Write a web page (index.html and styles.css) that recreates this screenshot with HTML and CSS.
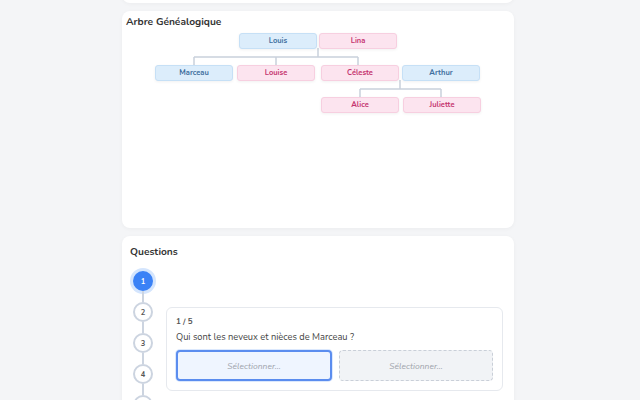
FILE: index.html
```html
<!DOCTYPE html>
<html lang="fr">
<head>
  <meta charset="UTF-8">
  <title>Arbre Généalogique - Questions</title>
  <link rel="stylesheet" href="styles.css">
</head>
<body>
<div class="page">
  <!-- bottom of the previous panel, scrolled out of view -->
  <div class="card card-prev"></div>

  <div class="card tree-card">
    <h3 class="card-title">Arbre Généalogique</h3>
    <div class="tree">
      <svg class="links" width="384" height="195">
        <path d="M192 19 V28 M68 28 H232 M68 28 V36 M150 28 V36 M232 28 V36" />
        <path d="M274 51 V60 M234 60 H315 M234 60 V68 M315 60 V68" />
      </svg>
      <div class="node male" style="left:113px; top:4px">Louis</div>
      <div class="node female" style="left:193px; top:4px">Lina</div>

      <div class="node male" style="left:29px; top:36px">Marceau</div>
      <div class="node female" style="left:111px; top:36px">Louise</div>
      <div class="node female" style="left:195px; top:36px">Céleste</div>
      <div class="node male" style="left:276px; top:36px">Arthur</div>

      <div class="node female" style="left:195px; top:68px">Alice</div>
      <div class="node female" style="left:277px; top:68px">Juliette</div>
    </div>
  </div>

  <div class="card quiz-card">
    <h3 class="card-title">Questions</h3>
    <div class="quiz">
      <div class="steps">
        <div class="step active">1</div>
        <div class="step">2</div>
        <div class="step">3</div>
        <div class="step">4</div>
        <div class="step">5</div>
      </div>
      <div class="quiz-body">
        <div class="question">
          <div class="q-count">1 / 5</div>
          <div class="q-text">Qui sont les neveux et nièces de Marceau ?</div>
          <div class="answers">
            <div class="slot selected">Sélectionner...</div>
            <div class="slot empty">Sélectionner...</div>
          </div>
        </div>
      </div>
    </div>
  </div>
</div>
</body>
</html>
```

FILE: styles.css
```css
* {
  box-sizing: border-box;
}

body {
  margin: 0;
  background: #f4f5f7;
  font-family: 'Nunito', 'Lato', sans-serif;
  color: #333;
}

.page {
  width: 392px;
  margin: -37px 0 0 122px;
  display: flex;
  flex-direction: column;
  gap: 8px;
}

.card {
  background: #ffffff;
  border-radius: 8px;
  box-shadow: 0 1px 4px rgba(0, 0, 0, 0.04);
}

.card-prev {
  height: 40px;
}

.card-title {
  margin: 0;
  font-size: 10.2px;
  line-height: 14px;
  font-weight: 700;
  color: #333;
}

/* family tree */
.tree-card {
  height: 217px;
  padding: 4px 4px 4px;
}

.tree {
  position: relative;
  height: 195px;
}

.links {
  position: absolute;
  left: 0;
  top: 0;
}

.links path {
  fill: none;
  stroke: #c9d1dc;
  stroke-width: 1.5;
}

.node {
  position: absolute;
  width: 78px;
  height: 16px;
  border-radius: 3px;
  font-size: 7.5px;
  font-weight: 700;
  line-height: 14px;
  text-align: center;
  box-shadow: 0 1px 3px rgba(0, 0, 0, 0.06);
}

.node.male {
  background: #dcedfb;
  border: 1px solid #c6e0f6;
  color: #3f6f9e;
}

.node.female {
  background: #fce4ef;
  border: 1px solid #f7cfe0;
  color: #c5356f;
}

/* questions */
.quiz-card {
  padding: 9px 11px 20px 8px;
}

.quiz {
  display: flex;
  margin-top: 12px;
}

.steps {
  display: flex;
  flex-direction: column;
  align-items: center;
  gap: 11px;
  margin-left: 3px;
}

.step {
  position: relative;
  width: 20px;
  height: 20px;
  border-radius: 50%;
  border: 2px solid #ccd4e0;
  background: #fff;
  color: #555;
  font-size: 7.5px;
  font-weight: 700;
  display: flex;
  align-items: center;
  justify-content: center;
}

.step + .step::before {
  content: '';
  position: absolute;
  left: 7px;
  top: -13px;
  width: 2px;
  height: 11px;
  background: #ccd4e0;
}

.step.active {
  background: #3b82f6;
  border-color: #3b82f6;
  color: #fff;
  box-shadow: 0 0 0 3px #d4e5fd;
}

.quiz-body {
  flex: 1;
  margin-left: 13px;
  padding-top: 36px;
}

.question {
  border: 1px solid #e6e9ee;
  border-radius: 6px;
  padding: 8px 9px 9px;
}

.q-count {
  font-size: 8px;
  font-weight: 700;
  line-height: 12px;
  color: #555;
}

.q-text {
  margin-top: 2px;
  font-size: 9.3px;
  line-height: 14px;
  color: #444;
}

.answers {
  display: flex;
  gap: 7px;
  margin-top: 6px;
}

.slot {
  flex: 1;
  height: 31px;
  border-radius: 4px;
  display: flex;
  align-items: center;
  justify-content: center;
  font-size: 8.5px;
  font-style: italic;
  color: #9ea3ab;
}

.slot.selected {
  border: 2px solid #5b8def;
  background: #eff5ff;
  box-shadow: 0 0 0 1px #dbe8fd;
}

.slot.empty {
  border: 1.5px dashed #c9cfd8;
  background: #f1f3f6;
}
```
